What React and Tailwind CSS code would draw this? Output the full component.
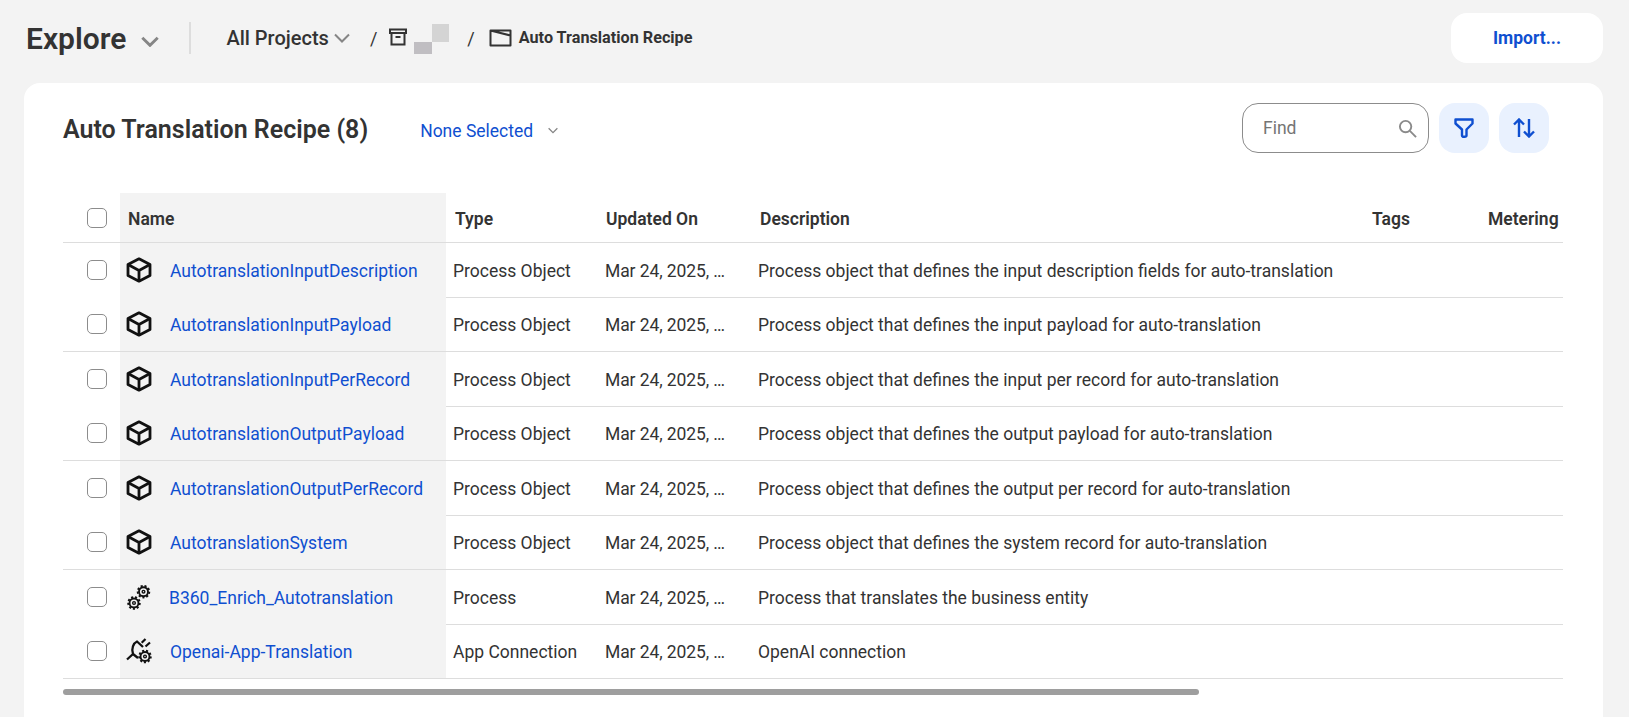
import React from 'react';

const ROWS = [
  { name: 'AutotranslationInputDescription', type: 'Process Object', desc: 'Process object that defines the input description fields for auto-translation', icon: 'cube' },
  { name: 'AutotranslationInputPayload', type: 'Process Object', desc: 'Process object that defines the input payload for auto-translation', icon: 'cube' },
  { name: 'AutotranslationInputPerRecord', type: 'Process Object', desc: 'Process object that defines the input per record for auto-translation', icon: 'cube' },
  { name: 'AutotranslationOutputPayload', type: 'Process Object', desc: 'Process object that defines the output payload for auto-translation', icon: 'cube' },
  { name: 'AutotranslationOutputPerRecord', type: 'Process Object', desc: 'Process object that defines the output per record for auto-translation', icon: 'cube' },
  { name: 'AutotranslationSystem', type: 'Process Object', desc: 'Process object that defines the system record for auto-translation', icon: 'cube' },
  { name: 'B360_Enrich_Autotranslation', type: 'Process', desc: 'Process that translates the business entity', icon: 'gears' },
  { name: 'Openai-App-Translation', type: 'App Connection', desc: 'OpenAI connection', icon: 'connection' },
];

const Chevron = ({ className, weight = 2 }) => (
  <svg viewBox="0 0 16 10" fill="none" stroke="currentColor" strokeWidth={weight} className={className}>
    <path d="M1 1.5 8 8.5 15 1.5" />
  </svg>
);

const Gear = ({ cx, cy, r }) => (
  <g fill="none" stroke="#111">
    <circle cx={cx} cy={cy} r={r} strokeWidth="1.9" />
    <circle cx={cx} cy={cy} r={r + 1.3} strokeWidth="1.9" strokeDasharray="2.1 1.85" />
    <circle cx={cx} cy={cy} r={r * 0.3} strokeWidth="1.4" />
  </g>
);

const RowIcon = ({ icon }) => {
  if (icon === 'cube') {
    return (
      <svg viewBox="0 0 26 26" fill="none" stroke="#111" strokeWidth="2.8" strokeLinejoin="round" className="w-[26px] h-[26px] shrink-0">
        <path d="M13 1.8 24 7.6V18.4L13 24.2 2 18.4V7.6Z" />
        <path d="M2 7.6 13 13.4 24 7.6M13 13.4V24.2" />
      </svg>
    );
  }
  if (icon === 'gears') {
    return (
      <svg viewBox="0 0 26 26" className="w-[26px] h-[26px] shrink-0 -mr-px">
        <Gear cx={17.5} cy={7.7} r={4.5} />
        <Gear cx={8} cy={19} r={4.5} />
      </svg>
    );
  }
  return (
    <svg viewBox="0 0 26 26" className="w-[26px] h-[26px] shrink-0">
      <path d="M1 21.5 7 16C5 11 7.5 5 11 3.5L17 9M7 16 12 20" fill="none" stroke="#111" strokeWidth="2.3" />
      <path d="M15.7 4.8 19.5 1M19.5 8.5 24 4.5" fill="none" stroke="#111" strokeWidth="2.2" />
      <Gear cx={19} cy={18.5} r={4.5} />
    </svg>
  );
};

const Checkbox = () => (
  <div className="w-5 h-5 rounded-[5px] border border-[#8c8c8c] bg-white" />
);

export default function App() {
  return (
    <div className="h-[717px] bg-[#f3f3f3] overflow-hidden text-[#333333] font-['Roboto',sans-serif]">
      {/* Top bar */}
      <div className="h-[83px] flex pl-[26px] pr-[26px] pt-[13px]">
        <div className="h-[50px] flex items-center">
          <span className="text-[30px] font-semibold leading-none mt-px">Explore</span>
          <Chevron weight={2.6} className="w-[18px] h-[11px] ml-[15px] mt-[6px] text-[#858585]" />
          <div className="w-[2px] h-[32px] bg-[#dddddd] ml-[30px]" />
          <span className="text-[20px] font-medium ml-[35px]">All Projects</span>
          <Chevron className="w-[16px] h-[10px] ml-[5px] text-[#858585]" />
          <span className="text-[18px] ml-5">/</span>
          <svg viewBox="0 0 18 18" fill="none" stroke="#333" strokeWidth="2" className="w-[18px] h-[18px] ml-3 -mt-[3px]">
            <path d="M1 1.5H17V5H1ZM2.5 5V16.5H15.5V5M6.5 9H11.5" />
          </svg>
          <div className="w-[35px] h-[30px] ml-[7px] mt-[2px] flex">
            <div className="w-[18px] h-[12px] bg-[#c0bec2] self-end" />
            <div className="w-[17px] h-[18px] bg-[#d4d4d4]" />
          </div>
          <span className="text-[18px] ml-[18px]">/</span>
          <svg viewBox="0 0 23 18" fill="none" stroke="#333" strokeWidth="2" strokeLinejoin="round" className="w-[23px] h-[18px] ml-[14px]">
            <path d="M1.5 1.5H21.5V16.5H1.5ZM1.5 1.5 21.5 6.5" />
          </svg>
          <span className="text-[16.2px] font-bold ml-[7px] mt-px">Auto Translation Recipe</span>
        </div>
        <button className="ml-auto w-[152px] h-[50px] rounded-[16px] bg-white text-[#0f4fd0] text-[17.5px] font-bold">
          Import...
        </button>
      </div>

      {/* Card */}
      <div className="ml-6 w-[1579px] h-[634px] bg-white rounded-t-[16px] pl-[39px] pt-5">
        <div className="w-[1486px] h-[50px] flex items-center">
          <h1 className="text-[25px] font-semibold leading-none mt-[3px]">Auto Translation Recipe (8)</h1>
          <span className="text-[#0f4fd0] text-[17.5px] ml-[52px] mt-[6px]">None Selected</span>
          <Chevron className="w-[10px] h-[7px] ml-[15px] mt-1 text-[#858585]" />
          <div className="ml-auto w-[187px] h-[50px] rounded-[16px] border border-[#8c8c8c] flex items-center pl-[20px] pr-[11px]">
            <span className="text-[#757575] text-[17.5px]">Find</span>
            <svg viewBox="0 0 20 20" fill="none" stroke="#8a8a8a" strokeWidth="2" className="w-[19px] h-[19px] ml-auto">
              <circle cx="8" cy="8" r="6" />
              <path d="M12.5 12.5 19 19" />
            </svg>
          </div>
          <button className="ml-[10px] w-[50px] h-[50px] rounded-[16px] bg-[#e9f1fe] flex items-center justify-center">
            <svg viewBox="0 0 20 20" fill="none" stroke="#0f4fd0" strokeWidth="2.4" strokeLinejoin="round" className="w-[20px] h-[20px]">
              <path d="M1.5 1.5H18.5V5.5L12.5 11.5V17.5C12.5 19 8 19.5 8 17.5V11.5L1.5 5.5Z" />
            </svg>
          </button>
          <button className="ml-[10px] w-[50px] h-[50px] rounded-[16px] bg-[#e9f1fe] flex items-center justify-center">
            <svg viewBox="0 0 22 20" fill="none" stroke="#0f4fd0" strokeWidth="2.4" className="w-[22px] h-[20px]">
              <path d="M6 19V1.5M1 6.5 6 1.5 11 6.5M16 1V18.5M11 13.5 16 18.5 21 13.5" />
            </svg>
          </button>
        </div>

        {/* Table */}
        <div className="w-[1500px] mt-10 overflow-hidden text-[17.5px]">
          <div className="h-[50px] flex items-center border-b border-[#dddddd] font-semibold">
            <div className="w-[57px] self-stretch flex items-center pl-6">
              <Checkbox />
            </div>
            <div className="w-[326px] self-stretch flex items-center pl-2 pt-[3px] bg-[#f3f3f3]">Name</div>
            <div className="w-[151px] pl-[9px] pt-[3px]">Type</div>
            <div className="w-[154px] pl-[9px] pt-[3px]">Updated On</div>
            <div className="w-[613px] pl-[9px] pt-[3px]">Description</div>
            <div className="w-[116px] pl-2 pt-[3px]">Tags</div>
            <div className="w-[83px] pl-2 pt-[3px] whitespace-nowrap">Metering</div>
          </div>
          {ROWS.map((row, idx) => {
            const line = idx % 2 === 1 ? 'border-[#dddddd]' : 'border-transparent';
            return (
              <div key={row.name} className="h-[54.5px] flex">
                <div className={`w-[57px] flex items-center pl-6 border-b ${line}`}>
                  <Checkbox />
                </div>
                <div className={`w-[326px] flex items-center pl-[6px] gap-[18px] bg-[#f3f3f3] border-b ${line}`}>
                  <RowIcon icon={row.icon} />
                  <a className="text-[#0f4fd0] whitespace-nowrap pt-[2px]">{row.name}</a>
                </div>
                <div className="flex-1 flex items-center pt-[2px] border-b border-[#dddddd]">
                  <div className="w-[151px] pl-[7px]">{row.type}</div>
                  <div className="w-[154px] pl-2 -tracking-[0.1px]">Mar 24, 2025, …</div>
                  <div className="pl-[7px] whitespace-nowrap">{row.desc}</div>
                </div>
              </div>
            );
          })}
        </div>

        {/* Horizontal scrollbar */}
        <div className="w-[1136px] h-[6px] mt-[10px] rounded-full bg-[#9e9e9e]" />
      </div>
    </div>
  );
}
